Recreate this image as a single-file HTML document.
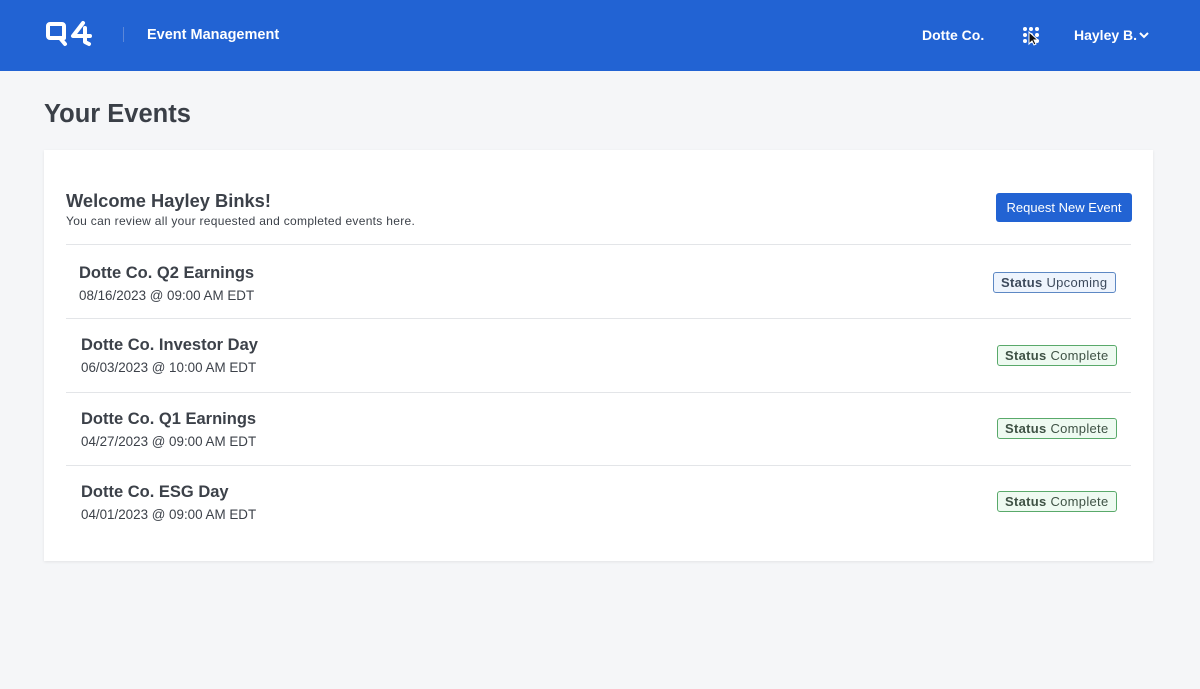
<!DOCTYPE html>
<html><head><meta charset="utf-8"><style>
*{margin:0;padding:0;box-sizing:border-box}
body{width:1200px;height:689px;background:#f5f6f8;font-family:"Liberation Sans",sans-serif;position:relative;overflow:hidden;color:#3c4149}
.hdr{position:absolute;left:0;top:0;width:1200px;height:71px;background:#2263d3;color:#fff}
.a{position:absolute;font-weight:bold;font-size:14px}
.card{position:absolute;left:44px;top:150px;width:1109px;height:411px;background:#fff;box-shadow:0 1px 3px rgba(0,0,0,.08)}
.t{position:absolute;white-space:nowrap}
.n{font-size:16.5px;font-weight:bold}
.d{font-size:13.4px}
.hr{position:absolute;left:66px;width:1065px;height:1px;background:#e3e5e8}
.badge{position:absolute;height:21px;border-radius:3px;font-size:13px;line-height:19px;padding:0 7px;white-space:nowrap;letter-spacing:.3px}
.up{background:#eef4fd;border:1px solid #5d88c4;color:#3d4a5c;width:123px}
.cp{background:#eefaf1;border:1px solid #59a96a;color:#3f5245;width:120px}
</style></head><body>
<div class="hdr">
<svg style="position:absolute;left:44px;top:20px" width="56" height="30" viewBox="0 0 56 30" fill="none" stroke="#fff" stroke-width="4" stroke-linejoin="round" stroke-linecap="round"><path d="M6 4h12a2 2 0 0 1 2 2v12h-14a2 2 0 0 1-2-2v-10a2 2 0 0 1 2-2z M16 18l5 6"/><path d="M39 3l-10 13h17 M41 8v14l4 2"/></svg>
<div style="position:absolute;left:123px;top:27px;width:1px;height:15px;background:#5b87d8"></div>
<div class="a" style="left:147px;top:27px;font-size:14.5px">Event Management</div>
<div class="a" style="left:922px;top:27px">Dotte Co.</div>
<svg style="position:absolute;left:1022px;top:26px" width="20" height="20"><g fill="#fff"><circle cx="3" cy="3" r="2"/><circle cx="9" cy="3" r="2"/><circle cx="15" cy="3" r="2"/><circle cx="3" cy="9" r="2"/><circle cx="9" cy="9" r="2"/><circle cx="15" cy="9" r="2"/><circle cx="3" cy="15" r="2"/><circle cx="9" cy="15" r="2"/><circle cx="15" cy="15" r="2"/></g><path d="M7 6l0 12 3-3 2 4 2-1-2-4 4 0z" fill="#111" stroke="#fff" stroke-width="1"/></svg>
<div class="a" style="left:1074px;top:27px">Hayley B.</div>
<svg style="position:absolute;left:1139px;top:31px" width="10" height="8"><path d="M1 2l4 4 4-4" stroke="#fff" stroke-width="2" fill="none"/></svg>
</div>
<div class="t" style="left:44px;top:100px;font-size:25.5px;font-weight:bold;color:#3a3f47">Your Events</div>
<div class="card"></div>
<div class="t" style="left:66px;top:190px;font-size:18.3px;font-weight:bold">Welcome Hayley Binks!</div>
<div class="t" style="left:66px;top:214px;font-size:12px;letter-spacing:.3px">You can review all your requested and completed events here.</div>
<div class="t" style="left:996px;top:193px;width:136px;height:29px;background:#2263d3;border-radius:3px;color:#fff;font-size:13px;line-height:29px;text-align:center">Request New Event</div>
<div class="hr" style="top:244px"></div>
<div class="t n" style="left:79px;top:264px">Dotte Co. Q2 Earnings</div>
<div class="t d" style="left:79px;top:288px">08/16/2023 @ 09:00 AM EDT</div>
<div class="badge up" style="left:993px;top:272px"><b>Status</b> Upcoming</div>
<div class="hr" style="top:318px"></div>
<div class="t n" style="left:81px;top:336px">Dotte Co. Investor Day</div>
<div class="t d" style="left:81px;top:360px">06/03/2023 @ 10:00 AM EDT</div>
<div class="badge cp" style="left:997px;top:345px"><b>Status</b> Complete</div>
<div class="hr" style="top:392px"></div>
<div class="t n" style="left:81px;top:410px">Dotte Co. Q1 Earnings</div>
<div class="t d" style="left:81px;top:434px">04/27/2023 @ 09:00 AM EDT</div>
<div class="badge cp" style="left:997px;top:418px"><b>Status</b> Complete</div>
<div class="hr" style="top:465px"></div>
<div class="t n" style="left:81px;top:483px">Dotte Co. ESG Day</div>
<div class="t d" style="left:81px;top:507px">04/01/2023 @ 09:00 AM EDT</div>
<div class="badge cp" style="left:997px;top:491px"><b>Status</b> Complete</div>
</body></html>
